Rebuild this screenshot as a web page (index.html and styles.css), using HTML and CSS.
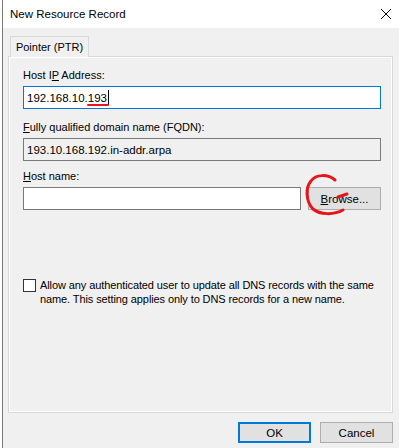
FILE: index.html
```html
<!DOCTYPE html>
<html lang="en">

<head>
    <meta charset="UTF-8">
    <title>New Resource Record</title>
    <link rel="stylesheet" href="styles.css">
</head>

<body>
    <div class="window">
        <div class="title-bar">
            <span class="title">New Resource Record</span>
            <svg class="close-icon" width="12" height="12" viewBox="0 0 12 12">
                <path d="M1 1 L11 11 M11 1 L1 11" stroke="#000" stroke-width="1" fill="none" />
            </svg>
        </div>

        <div class="body">
            <div class="tabs">
                <div class="tab active">Pointer (PTR)</div>
            </div>
            <div class="tab-panel">
                <div class="field ip">
                    <label class="label">Host I<u>P</u> Address:</label>
                    <div class="input focused">
                        <span>192.168.10.<span class="scribble">193</span></span><span class="caret"></span>
                    </div>
                </div>

                <div class="field fqdn">
                    <label class="label"><u>F</u>ully qualified domain name (FQDN):</label>
                    <div class="input readonly">193.10.168.192.in-addr.arpa</div>
                </div>

                <div class="field">
                    <label class="label"><u>H</u>ost name:</label>
                    <div class="row">
                        <div class="input host"></div>
                        <button class="btn browse"><u>B</u>rowse...</button>
                        <svg class="circle-mark" width="50" height="48" viewBox="0 0 50 48">
                            <path d="M35 7 C28 1 16 1 11 8 C5 15 6 29 13 36 C20 42 34 42 43 37 M38 24 L47 21"
                                stroke="#e8141b" stroke-width="3" fill="none" stroke-linecap="round" />
                        </svg>
                    </div>
                </div>

                <label class="check">
                    <span class="box"></span>
                    <span class="check-text">Allow any authenticated user to update all DNS records with the same name. This setting applies only to DNS records for a new name.</span>
                </label>
            </div>

            <div class="actions">
                <button class="btn default">OK</button>
                <button class="btn">Cancel</button>
            </div>
        </div>
    </div>
</body>

</html>
```

FILE: styles.css
```css
body {
    margin: 0;
    padding-left: 2px;
    background-color: #ffffff;
    font-family: 'Liberation Sans', Arial, sans-serif;
    font-size: 11px;
    color: #000;
}

.window {
    border-left: 1px solid #7a7a7a;
    height: 448px;
    background-color: #f0f0f0;
}

.title-bar {
    height: 28px;
    background-color: #fff;
    display: flex;
    align-items: center;
    justify-content: space-between;
    padding: 0 7px 0 7px;
}

.title {
    font-size: 11.5px;
}

.body {
    padding: 8px 6px 0 5px;
}

.tabs {
    display: flex;
    padding-left: 2px;
}

.tab {
    height: 20px;
    width: 77px;
    display: flex;
    align-items: center;
    justify-content: center;
    border: 1px solid #d9d9d9;
    border-bottom: none;
    background-color: #f0f0f0;
    position: relative;
    z-index: 1;
    margin-bottom: -1px;
}

.tab-panel {
    height: 343px;
    border: 1px solid #d9d9d9;
    box-shadow: inset 0 0 0 1px #fff;
    padding: 12px 11px 0 14px;
}

.field {
    margin-bottom: 9px;
}

.field.ip {
    margin-bottom: 12px;
}

.label {
    display: block;
    height: 15px;
    margin-bottom: 2px;
}

.input {
    height: 21px;
    border: 1px solid #7a7a7a;
    background-color: #fff;
    display: flex;
    align-items: center;
    padding-left: 3px;
    font-size: 11.5px;
}

.input.focused {
    border-color: #0078d7;
}

.input.readonly {
    background-color: #f0f0f0;
}

.scribble {
    position: relative;
}

.scribble::after {
    content: '';
    position: absolute;
    left: -1px;
    right: -2px;
    bottom: -2px;
    height: 2px;
    border-radius: 2px;
    background-color: #e8141b;
}

.caret {
    display: inline-block;
    width: 1px;
    height: 15px;
    background-color: #000;
    margin-left: 1px;
}

.row {
    display: flex;
    gap: 7px;
    position: relative;
}

.input.host {
    flex: 1;
}

.btn {
    font-family: inherit;
    font-size: 11.5px;
    height: 21px;
    width: 73px;
    background-color: #e1e1e1;
    border: 1px solid #adadad;
    padding: 0;
    margin: 0;
}

.browse {
    height: 23px;
}

.circle-mark {
    position: absolute;
    right: 31px;
    top: -14px;
}

.check {
    display: flex;
    align-items: flex-start;
    gap: 4px;
    margin-top: 68px;
}

.box {
    flex: none;
    width: 11px;
    height: 11px;
    border: 1px solid #333;
    background-color: #fff;
    margin-top: 1px;
}

.check-text {
    line-height: 14px;
    letter-spacing: -0.1px;
}

.actions {
    display: flex;
    justify-content: flex-end;
    gap: 9px;
    padding-top: 9px;
}

.btn.default {
    border: 2px solid #0078d7;
}
```
